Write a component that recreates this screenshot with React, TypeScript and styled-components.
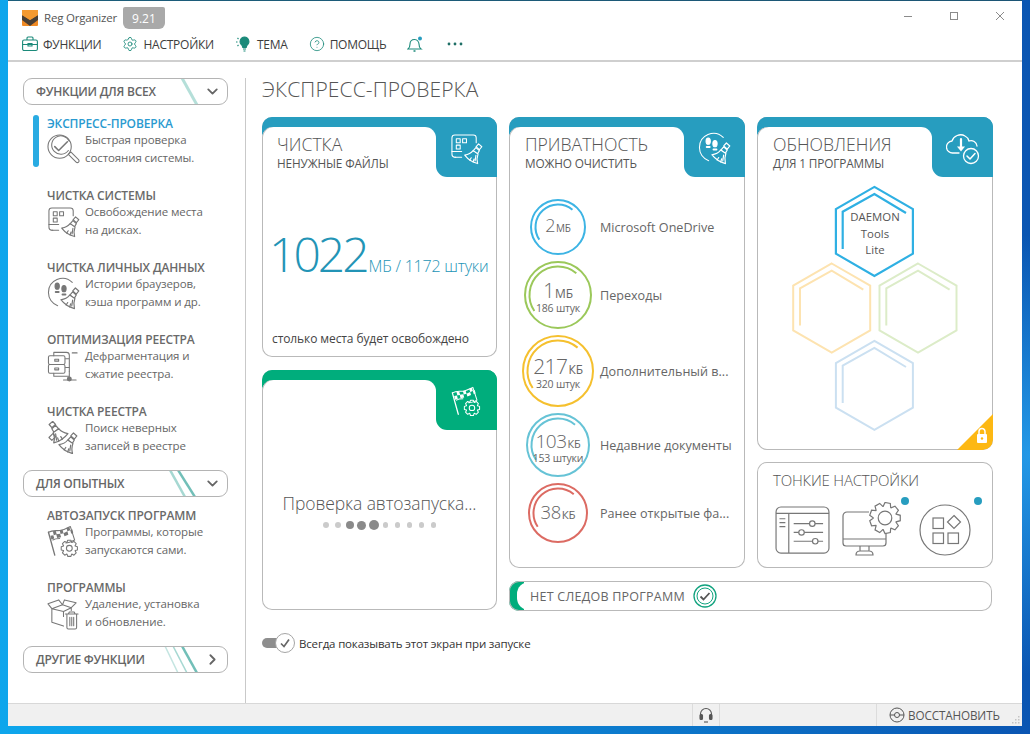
import React from "react";
import styled, { createGlobalStyle } from "styled-components";
import { Settings, CircleHelp, ChevronDown, ChevronRight } from "lucide-react";

const Global = createGlobalStyle`
  html, body { margin: 0; padding: 0; height: 734px; overflow: hidden; }
  body { font-family: "Open Sans", "Noto Sans", sans-serif; color: #666; }
  * { box-sizing: border-box; }
`;

const BLUE = "#279dbf";
const GREEN = "#00ad7c";

const Desktop = styled.div`
  width: 1030px; height: 734px; padding: 1px 8px 8px 8px;
  background:
    radial-gradient(ellipse 160px 220px at 100% 62%, rgba(40, 165, 240, .85), transparent),
    linear-gradient(90deg, #0ea6ec 0%, #0d8edb 40%, #0a55b2 100%);
`;
const Window = styled.div`
  width: 1014px; height: 725px; background: #fff; display: flex; flex-direction: column;
  box-shadow: 0 -1px 0 0 rgba(30,85,110,.9);
`;
const TitleBar = styled.div`
  height: 29px; display: flex; align-items: center; padding: 4px 0 0 14px; flex: none;
`;
const AppName = styled.span`
  font-size: 11.5px; color: #555; margin-left: 6px; letter-spacing: -.2px;
`;
const Version = styled.span`
  margin: 1px 0 0 6px; width: 42px; height: 22px; background: #a9a9a9; color: #fff; font-size: 12px;
  display: flex; align-items: center; justify-content: center; border-radius: 2px 2px 6px 6px;
`;
const WinControls = styled.div`
  margin: 0 0 4px auto; display: flex; align-items: center; color: #8b8b8b; padding-right: 17px;
  svg { display: block; margin-left: 36px; }
`;
const Toolbar = styled.div`
  height: 32px; padding: 0 0 2px 14px; display: flex; align-items: center; gap: 21px; flex: none;
  border-bottom: 2px solid #cfcfcf;
`;
const ToolItem = styled.div<{ $ml?: number }>`
  display: flex; align-items: center; gap: 5px; font-size: 12px; color: #3d3d3d; letter-spacing: -.25px;
  margin-left: ${(p) => p.$ml ?? 0}px;
  svg { color: #1b8a7a; display: block; flex: none; }
`;
const Body = styled.div`
  flex: 1; display: flex; min-height: 0;
`;
const Sidebar = styled.div`
  width: 238px; margin-top: 16px; padding: 0 17px 0 15px; border-right: 1px solid #c9c9c9; flex: none;
  display: flex; flex-direction: column;
`;
const GroupHeader = styled.div<{ $top?: number }>`
  height: 27px; margin-top: ${(p) => p.$top ?? 0}px; border: 1px solid #b4b4b4; border-radius: 9px;
  display: flex; align-items: center; padding-left: 12px; font-size: 12px; font-weight: 600; color: #666; flex: none;
  overflow: hidden; letter-spacing: -.24px; white-space: nowrap;
  & > svg:last-child { color: #666; margin: 0 6px 0 0; flex: none; }
`;
const Stripes = styled.svg`
  margin-left: auto; flex: none; display: block; margin-right: 2px;
`;
const Item = styled.div<{ $top?: number }>`
  display: flex; height: 54px; padding-left: 10px; margin-top: ${(p) => p.$top ?? 18}px; flex: none;
`;
const Marker = styled.div<{ $on?: boolean }>`
  width: 6px; height: 52px; margin: 1px 8px 0 0; border-radius: 3px; flex: none;
  background: ${(p) => (p.$on ? "#29abe2" : "transparent")};
`;
const ItemBody = styled.div`
  flex: 1; min-width: 0; padding-top: 1px;
`;
const ItemTitle = styled.div<{ $on?: boolean }>`
  font-size: 12px; line-height: 18px; font-weight: 600; white-space: nowrap; letter-spacing: -.15px;
  color: ${(p) => (p.$on ? "#2a9ad0" : "#6a6a6a")};
`;
const ItemRow = styled.div`
  display: flex;
`;
const ItemIcon = styled.div`
  width: 38px; flex: none; color: #777;
  svg { display: block; }
`;
const ItemDesc = styled.div`
  font-size: 11.5px; line-height: 18px; color: #666; white-space: nowrap; letter-spacing: -.1px; margin-top: -2px;
`;
const Main = styled.div`
  flex: 1; padding: 13px 0 0 16px; min-width: 0;
`;
const PageTitle = styled.div`
  font-size: 21px; line-height: 28px; font-weight: 300; color: #555; margin-bottom: 14px; letter-spacing: .1px;
`;
const Board = styled.div`
  display: flex; gap: 12px; align-items: flex-start;
`;
const LeftCol = styled.div`
  width: 235px; display: flex; flex-direction: column; gap: 13px; flex: none;
`;
const RightArea = styled.div`
  width: 484px; display: flex; flex-direction: column; gap: 13px; flex: none;
`;
const RightRow = styled.div`
  display: flex; gap: 12px; height: 451px;
`;
const RightStack = styled.div`
  display: flex; flex-direction: column; gap: 12px;
`;
const Card = styled.div<{ $h?: number; $w?: number }>`
  position: relative; border-radius: 10px; overflow: hidden; background: #fff;
  box-shadow: inset 0 0 0 1px #b9b9b9;
  ${(p) => (p.$h ? `height: ${p.$h}px; flex: none;` : "")}
  ${(p) => (p.$w ? `width: ${p.$w}px; flex: none;` : "")}
  display: flex; flex-direction: column;
`;
const CardHeader = styled.div<{ $c: string }>`
  height: 60px; display: flex; flex: none;
  background: linear-gradient(${(p) => p.$c} 30px, #fff 30px);
`;
const Tab = styled.div<{ $pl?: number }>`
  flex: 1; margin-top: 10px; background: #fff; border-radius: 11px 11px 0 0; padding: 7px 0 0 ${(p) => p.$pl ?? 16}px;
  box-shadow: inset 1px 0 0 #b9b9b9;
`;
const CardTitle = styled.div`
  font-size: 17.6px; line-height: 21px; font-weight: 300; color: #555; white-space: nowrap;
`;
const CardSub = styled.div`
  font-size: 11.8px; line-height: 16px; color: #555; white-space: nowrap; letter-spacing: -.15px;
`;
const Corner = styled.div<{ $c: string }>`
  width: 61px; flex: none; background: ${(p) => p.$c}; border-bottom-left-radius: 11px; color: #fff;
  display: flex; align-items: center; justify-content: center; padding: 3px 0 0 0;
  svg { display: block; }
`;
const SizeBody = styled.div`
  flex: 1; display: flex; flex-direction: column; padding: 0 8px 9px 10px;
`;
const BigLine = styled.div`
  display: flex; align-items: baseline; color: #2394b6; margin-top: 44px; white-space: nowrap;
`;
const BigNum = styled.span`
  font-size: 48px; line-height: 66px; font-weight: 300; letter-spacing: -3px; margin-left: -3px;
`;
const BigRest = styled.span`
  font-size: 16.1px; font-weight: 300; margin-left: 2px; letter-spacing: -.25px;
`;
const Note = styled.div`
  margin-top: auto; font-size: 12px; line-height: 18px; color: #444; white-space: nowrap; letter-spacing: -.1px;
`;
const LoadBody = styled.div`
  flex: 1; display: flex; flex-direction: column; align-items: center; padding-top: 60px;
`;
const LoadText = styled.div`
  font-size: 17.5px; line-height: 26px; font-weight: 300; color: #555; white-space: nowrap; letter-spacing: -.1px;
`;
const Dots = styled.div`
  display: flex; align-items: center; height: 12px; margin-top: 3px;
`;
const DotSlot = styled.div`
  width: 12px; display: flex; justify-content: center;
`;
const Dot = styled.div<{ $s: number; $dark?: boolean }>`
  width: ${(p) => p.$s}px; height: ${(p) => p.$s}px; border-radius: 50%;
  background: ${(p) => (p.$dark ? "#8a8a8a" : "#cbcbcb")};
`;
const RingList = styled.div`
  display: flex; flex-direction: column; gap: 6px; padding-top: 22px;
`;
const RingRow = styled.div`
  display: flex; align-items: center;
`;
const RingSlot = styled.div`
  width: 84px; flex: none; display: flex; justify-content: center; padding-left: 14px;
`;
const RingStack = styled.div<{ $d: number }>`
  width: ${(p) => p.$d}px; height: ${(p) => p.$d}px; display: grid; place-items: center; flex: none;
  & > * { grid-area: 1 / 1; }
`;
const RingText = styled.div<{ $two?: boolean }>`
  display: flex; flex-direction: column; align-items: center; color: #666; white-space: nowrap;
  padding-top: ${(p) => (p.$two ? 6 : 0)}px;
`;
const RingValue = styled.div<{ $n: number; $two?: boolean }>`
  font-size: ${(p) => p.$n}px; line-height: ${(p) => (p.$two ? 16 : p.$n + 1)}px; font-weight: 300; letter-spacing: -.5px;
`;
const RingUnit = styled.span<{ $u: number }>`
  font-size: ${(p) => p.$u}px; font-weight: 400; margin-left: 1px; letter-spacing: -.2px;
`;
const RingCount = styled.div`
  font-size: 10.5px; line-height: 12px; letter-spacing: -.2px;
`;
const RingLabel = styled.div`
  font-size: 12.6px; color: #666; white-space: nowrap; padding-left: 7px;
`;
const HexBody = styled.div`
  position: relative; flex: 1;
  svg { display: block; }
`;
const HexText = styled.div`
  position: absolute; left: 0; top: 32px; width: 236px; text-align: center;
  font-size: 11.4px; line-height: 16.5px; color: #555;
`;
const LockMark = styled.div`
  position: absolute; right: 0; bottom: 0; line-height: 0;
`;
const FineBody = styled.div`
  padding: 8px 0 0 16px; height: 100%; position: relative;
`;
const FineTitle = styled.div`
  font-size: 15px; line-height: 20px; font-weight: 300; color: #555; white-space: nowrap; letter-spacing: -.2px;
`;
const FineIcons = styled.div`
  display: flex; margin-top: 12px; color: #777; align-items: center;
  svg { display: block; flex: none; }
`;
const FineIcon = styled.div<{ $ml: number }>`
  margin-left: ${(p) => p.$ml}px;
`;
const BlueDot = styled.div<{ $x: number }>`
  position: absolute; top: 35px; left: ${(p) => p.$x}px; width: 8px; height: 8px; border-radius: 50%; background: ${BLUE};
`;
const TraceBar = styled.div`
  height: 30px; width: 483px; border-radius: 10px; display: flex; align-items: center; overflow: hidden;
  box-shadow: inset 0 0 0 1px #b9b9b9; position: relative; padding-left: 21px; gap: 8px;
  font-size: 12.5px; color: #666; letter-spacing: .25px; white-space: nowrap;
  background: linear-gradient(90deg, ${GREEN} 15px, #fff 15px);
  &::before {
    content: ""; position: absolute; left: 8px; top: 1px; bottom: 1px; width: 14px; background: #fff;
    border-radius: 12px 0 0 12px;
  }
  & > * { position: relative; }
  svg { display: block; flex: none; }
`;
const TraceText = styled.span`
  position: relative;
`;
const SwitchRow = styled.div`
  display: flex; align-items: center; margin-top: 10px; font-size: 11.5px; color: #333; letter-spacing: -.17px;
  gap: 4px; white-space: nowrap;
`;
const SwitchBox = styled.div`
  width: 33px; height: 20px; display: flex; align-items: center; flex: none; position: relative;
`;
const SwitchTrack = styled.div`
  width: 24px; height: 10px; background: #8e8e8e; border-radius: 5px 0 0 5px;
`;
const SwitchKnob = styled.div`
  position: absolute; right: 0; top: 0; width: 20px; height: 20px; border-radius: 50%; background: #fff;
  border: 1px solid #a5a5a5; display: flex; align-items: center; justify-content: center; color: #666;
`;
const StatusBar = styled.div`
  height: 23px; flex: none; background: #f0f0f0; border-top: 1px solid #d8d8d8; display: flex; position: relative;
`;
const HelpCell = styled.div`
  width: 28px; margin-left: 684px; border-left: 1px solid #dcdcdc; border-right: 1px solid #dcdcdc;
  display: flex; align-items: center; justify-content: center; flex: none; color: #555;
  svg { display: block; }
`;
const RestoreCell = styled.div`
  width: 146px; margin-left: 156px; border-left: 1px solid #dcdcdc; padding-left: 12px;
  display: flex; align-items: center; flex: none; color: #555; gap: 3px;
  svg { display: block; flex: none; }
`;
const Restore = styled.span`
  font-size: 11.7px; letter-spacing: -.12px; color: #555;
`;
const Grip = styled.svg`
  position: absolute; right: 2px; bottom: 2px;
`;

type IP = { size?: number; bg?: string };

const BroomPart = ({ tx, ty, s = 1, bg = "#fff" }: { tx: number; ty: number; s?: number; bg?: string }) => (
  <g transform={`translate(${tx} ${ty}) scale(${s})`}>
    <path d="M16.6 1.2l3.2 2.8-2.4 2.9-3.3-2.9z" fill={bg} />
    <path d="M14 4.8l-2.6 3 4 3.4 2-3.4z" fill={bg} />
    <path d="M11.2 7.8c-2 2.6-5 3.9-8.2 4.4 2 2.6 6.7 6.8 12.7 8.3-.8-3-.8-6.3.4-9.4z" fill={bg} />
    <path d="M9.4 14.8l-1.5 2.3M12.2 16l-1 3M14 12.5l-.8 5.5" />
  </g>
);

const I = ({ size = 34, children }: { size?: number; children: React.ReactNode }) => (
  <svg width={size} height={size} viewBox="0 0 34 34" fill="none" stroke="currentColor" strokeWidth="1.1" strokeLinejoin="round" strokeLinecap="round">
    {children}
  </svg>
);

function gearD(cx: number, cy: number, r: number, teeth = 8) {
  const pts: string[] = [];
  const inner = r * 0.76;
  for (let i = 0; i < teeth; i++) {
    const a = (i / teeth) * Math.PI * 2;
    const w = Math.PI / teeth;
    const seq: [number, number][] = [[a - w * 0.95, inner], [a - w * 0.5, r], [a + w * 0.5, r], [a + w * 0.95, inner]];
    seq.forEach(([an, rr]) => pts.push(`${(cx + Math.cos(an) * rr).toFixed(2)} ${(cy + Math.sin(an) * rr).toFixed(2)}`));
  }
  return "M" + pts.join("L") + "Z";
}

const SearchCheck = ({ size }: IP) => (
  <I size={size}>
    <circle cx="13" cy="14" r="12" />
    <path d="M23 8.5A9.500 9.500 0 1 0 22 18" />
    <path d="M8 14l4 4 9-9" strokeWidth="1.6" />
    <path d="M22 22l2.500-2.500 8 8a1.700 1.700 0 0 1-2.500 2.500z" />
  </I>
);
const DiskBroom = ({ size, bg }: IP) => (
  <I size={size}>
    <path d="M12 26H5a3 3 0 0 1-3-3V6a3 3 0 0 1 3-3h19a3 3 0 0 1 3 3v5" />
    <path d="M2 20h10M6 26l-1 0" />
    <rect x="6.5" y="7" width="4" height="4" /><rect x="13" y="7" width="4" height="4" /><rect x="6.5" y="13.5" width="4" height="4" />
    <BroomPart tx={12} ty={11} s={1.05} bg={bg} />
  </I>
);
const PrivacyBroom = ({ size, bg }: IP) => (
  <I size={size}>
    <path d="M11 29.500C5 27.500 1.500 22 1.500 16A14.500 14.500 0 0 1 26 5.500" />
    <ellipse cx="10.5" cy="9.5" rx="2.2" ry="3.2" fill="currentColor" />
    <path d="M9 15.5h3" strokeWidth="2" />
    <ellipse cx="17.5" cy="12" rx="2.2" ry="3.2" fill="currentColor" />
    <path d="M16 18h3" strokeWidth="2" />
    <BroomPart tx={11} ty={10} s={1.1} bg={bg} />
  </I>
);
const RegOpt = ({ size }: IP) => (
  <I size={size}>
    <rect x="1.5" y="7" width="17" height="9" rx="1.5" /><rect x="1.5" y="16" width="17" height="9" rx="1.5" />
    <path d="M8 10.500h4v2H8zM8 19.500h4v2H8z" />
    <path d="M7 7V3.500h13a3 3 0 0 1 3 3V23M19 10h4M26 4h5" />
    <path d="M7 25v3h16v-5M19 19h4M23 28v3M17 32h13" />
    <circle cx="23" cy="31" r="2" fill="currentColor" />
  </I>
);
const TwoBrooms = ({ size, bg }: IP) => (
  <I size={size}>
    <g transform="translate(34 0) scale(-1 1)"><BroomPart tx={9} ty={-1} s={1.15} bg={bg} /></g>
    <BroomPart tx={9} ty={11} s={1.1} bg={bg} />
    <path d="M2 17l4-4 3 3-4 4z" />
  </I>
);
const FlagGear = ({ size }: IP) => (
  <I size={size}>
    <path d="M8 31L1.500 7.500" strokeWidth="1.4" />
    <path d="M1.500 7.500c5-3 9-1 13-2s7-3 9.500-4l4.500 14c-3 1.500-6 3-9 3" />
    <path d="M6 6.500l3-.5 1 3.500-3 1zM13 5.500l3-.5 1 3.500-3 .7zM20 3l3-1 1 3.500-3 1zM9.500 9.500l4-.5 1 3.500-4 1zM17 8.500l4-2 1 3.500-4 1.500zM3.500 11l3-.5 1 3.500-3 1zM24 5.500l2-1 1 3.500-2 1z" fill="currentColor" stroke="none" />
    <path d="M6 15.500c2.500-1.500 4-1.500 7-1.500" />
    <path d={gearD(23, 24, 8.5)} />
    <circle cx="23" cy="24" r="3" />
  </I>
);
const BoxTrash = ({ size }: IP) => (
  <I size={size}>
    <path d="M5 12v14l12 4M5 12l12 3v5M17 15l8-4v3M5 12L1 7l11-4 4 5-11 4zM16 8l9 3 5-5-12-3-2 5z" />
    <path d="M19 17.500h13M22 17.500l1-2h5l1 2M20.500 17.500v14a1.500 1.500 0 0 0 1.500 1.500h7a1.500 1.500 0 0 0 1.500-1.500v-14" />
    <path d="M23.500 21v8.500M25.500 21v8.500M27.500 21v8.500" />
  </I>
);
const CloudDown = ({ size }: IP) => (
  <I size={size}>
    <path d="M13 21H7a6 6 0 0 1-1-12c1.500-5 8-8 13-5 2 1 3.500 3 4 5a6 6 0 0 1 8 5" strokeWidth="1.3" />
    <path d="M15 7v9" strokeWidth="2.2" />
    <path d="M11 14.500h8l-4 5z" fill="currentColor" stroke="none" />
    <circle cx="25" cy="24" r="7.5" strokeWidth="1.3" />
    <path d="M21 24l3 3 5-5.500" strokeWidth="1.5" />
  </I>
);

const Logo = () => (
  <svg width="16" height="16" viewBox="0 0 16 16">
    <rect x="0" y="0" width="16" height="16" rx="1" fill="#f08a24" />
    <path d="M0 5l8 5 8-5v5l-8 6-8-6z" fill="#4a4036" />
    <path d="M0 0h16v5l-8 5-8-5z" fill="#f59a30" />
  </svg>
);

function arc(c: number, r: number, a0: number, a1: number) {
  const p = (a: number) => {
    const t = ((a - 90) * Math.PI) / 180;
    return `${(c + r * Math.cos(t)).toFixed(2)} ${(c + r * Math.sin(t)).toFixed(2)}`;
  };
  return `M${p(a0)}A${r} ${r} 0 0 1 ${p(a1)}`;
}

const Ring = ({ d, color }: { d: number; color: string }) => {
  const c = d / 2;
  return (
    <svg width={d} height={d} fill="none" stroke={color}>
      <circle cx={c} cy={c} r={c - 1} strokeWidth="2" />
      <path d={arc(c, c - 5.5, 236, 400)} strokeWidth="2" />
    </svg>
  );
};

const rings = [
  { d: 56, color: "#3db4e4", v: "2", n: 18, unit: "МБ", u: 10, label: "Microsoft OneDrive" },
  { d: 68, color: "#9bc85a", v: "1", n: 20, unit: "МБ", u: 12, count: "186 штук", label: "Переходы" },
  { d: 72, color: "#f5c02e", v: "217", n: 21, unit: "КБ", u: 12, count: "320 штук", label: "Дополнительный в..." },
  { d: 64, color: "#66c3d6", v: "103", n: 19, unit: "КБ", u: 11, count: "153 штуки", label: "Недавние документы" },
  { d: 60, color: "#dc6b63", v: "38", n: 18.5, unit: "КБ", u: 11.5, label: "Ранее открытые фа..." },
];

const Hex = ({ x, y, c, w = 2 }: { x: number; y: number; c: string; w?: number }) => (
  <g transform={`translate(${x} ${y})`} fill="none" stroke={c} strokeWidth={w} strokeLinejoin="miter">
    <path d="M0-44.500L38.500-22.300V22.300L0 44.500-38.500 22.300V-22.300Z" />
    <path d="M-31.700 17.600V-19.700L0-37.400 31.600-18.400" />
  </g>
);

const StripeSet = ({ n }: { n: number }) => (
  <Stripes width="46" height="27" viewBox="0 0 46 27" fill="none" strokeWidth="2.5">
    {n === 1 && <path d="M26 0l15 27" stroke="#b5dfd9" strokeWidth="3" />}
    {n === 2 && (<><path d="M14 0l15 27" stroke="#a6d8d2" /><path d="M22 0l17 27" stroke="#72bfb8" /></>)}
    {n === 3 && (<><path d="M9 0l13 27" stroke="#c4e5e1" strokeWidth="1.5" /><path d="M17 0l14 27" stroke="#a6d8d2" strokeWidth="1.5" /><path d="M26 0l15 27" stroke="#72bfb8" /></>)}
  </Stripes>
);

const items1 = [
  { t: "ЭКСПРЕСС-ПРОВЕРКА", a: "Быстрая проверка", b: "состояния системы.", on: true, I: SearchCheck },
  { t: "ЧИСТКА СИСТЕМЫ", a: "Освобождение места", b: "на дисках.", I: DiskBroom },
  { t: "ЧИСТКА ЛИЧНЫХ ДАННЫХ", a: "Истории браузеров,", b: "кэша программ и др.", I: PrivacyBroom },
  { t: "ОПТИМИЗАЦИЯ РЕЕСТРА", a: "Дефрагментация и", b: "сжатие реестра.", I: RegOpt },
  { t: "ЧИСТКА РЕЕСТРА", a: "Поиск неверных", b: "записей в реестре", I: TwoBrooms },
];
const items2 = [
  { t: "АВТОЗАПУСК ПРОГРАММ", a: "Программы, которые", b: "запускаются сами.", I: FlagGear },
  { t: "ПРОГРАММЫ", a: "Удаление, установка", b: "и обновление.", I: BoxTrash },
];

type It = { t: string; a: string; b: string; on?: boolean; I: React.FC<IP> };
const SideItem = ({ it, top }: { it: It; top: number }) => (
  <Item $top={top}>
    <Marker $on={it.on} />
    <ItemBody>
      <ItemTitle $on={it.on}>{it.t}</ItemTitle>
      <ItemRow>
        <ItemIcon><it.I size={33} bg="#fff" /></ItemIcon>
        <ItemDesc>{it.a}<br />{it.b}</ItemDesc>
      </ItemRow>
    </ItemBody>
  </Item>
);

const CheckMark = () => (
  <svg width="12" height="12" viewBox="0 0 12 12" fill="none" stroke="currentColor" strokeWidth="1.7"><path d="M2 6.500l3 3 5-7" /></svg>
);

export default function App() {
  const dots = [6, 6, 8, 9, 10, 5.5, 5.5, 5.5, 5.5, 5.5];
  return (
    <Desktop>
      <Global />
      <Window>
        <TitleBar>
          <Logo />
          <AppName>Reg Organizer</AppName>
          <Version>9.21</Version>
          <WinControls>
            <svg width="10" height="10" viewBox="0 0 10 10" stroke="currentColor" fill="none"><path d="M1 5.500h8" /></svg>
            <svg width="10" height="10" viewBox="0 0 10 10" stroke="currentColor" fill="none"><rect x="1.5" y="1.5" width="7" height="7" /></svg>
            <svg width="10" height="10" viewBox="0 0 10 10" stroke="currentColor" fill="none"><path d="M1 1l8 8M9 1l-8 8" /></svg>
          </WinControls>
        </TitleBar>
        <Toolbar>
          <ToolItem>
            <svg width="16" height="16" viewBox="0 0 16 16" fill="none" stroke="currentColor" strokeWidth="1.1"><rect x=".6" y="4" width="14.8" height="10.5" rx="1.5" /><path d="M5 4V2a1 1 0 0 1 1-1h4a1 1 0 0 1 1 1v2M.6 8.500h14.800M6 7.500h4v2.500H6z" /></svg>
            ФУНКЦИИ
          </ToolItem>
          <ToolItem><Settings size={16} strokeWidth={1.3} />НАСТРОЙКИ</ToolItem>
          <ToolItem>
            <svg width="17" height="17" viewBox="0 0 17 17" fill="none" stroke="currentColor" strokeWidth="1.1"><path d="M9.500 1a4.500 4.500 0 0 1 2.700 8c-.7.700-.9 1.500-1 2.500H7.800C7.700 10.500 7.500 9.700 6.800 9a4.500 4.500 0 0 1 2.700-8z" fill="currentColor" /><path d="M8 13h3M8.500 15h2M1 6h1.500M2.500 2l1 1M2.500 10l1-1" /></svg>
            ТЕМА
          </ToolItem>
          <ToolItem><CircleHelp size={16} strokeWidth={1.2} />ПОМОЩЬ</ToolItem>
          <ToolItem>
            <svg width="16" height="17" viewBox="0 0 16 17" fill="none" stroke="currentColor" strokeWidth="1.1"><path d="M1 13c1.500-1 2-2.500 2-5s1.500-4.500 4.500-4.500c1.500 0 2.500.5 3.300 1.500.8 1 1.200 2 1.200 3 0 2.500.5 4 2 5z" /><path d="M6.500 15h2" strokeWidth="1.5" /><circle cx="13" cy="2.500" r="2" fill="#279dbf" stroke="none" /></svg>
          </ToolItem>
          <ToolItem $ml={3}>
            <svg width="16" height="4" viewBox="0 0 16 4" fill="#1f6f66"><circle cx="2" cy="2" r="1.4" /><circle cx="8" cy="2" r="1.4" /><circle cx="14" cy="2" r="1.4" /></svg>
          </ToolItem>
        </Toolbar>
        <Body>
          <Sidebar>
            <GroupHeader>ФУНКЦИИ ДЛЯ ВСЕХ<StripeSet n={1} /><ChevronDown size={17} strokeWidth={2.6} /></GroupHeader>
            {items1.map((it, i) => <SideItem key={it.t} it={it} top={i === 0 ? 9 : 18} />)}
            <GroupHeader $top={14}>ДЛЯ ОПЫТНЫХ<StripeSet n={2} /><ChevronDown size={17} strokeWidth={2.6} /></GroupHeader>
            {items2.map((it, i) => <SideItem key={it.t} it={it} top={i === 0 ? 9 : 18} />)}
            <GroupHeader $top={14}>ДРУГИЕ ФУНКЦИИ<StripeSet n={3} /><ChevronRight size={17} strokeWidth={2.6} /></GroupHeader>
          </Sidebar>
          <Main>
            <PageTitle>ЭКСПРЕСС-ПРОВЕРКА</PageTitle>
            <Board>
              <LeftCol>
                <Card $h={240}>
                  <CardHeader $c={BLUE}>
                    <Tab $pl={15}><CardTitle>ЧИСТКА</CardTitle><CardSub>НЕНУЖНЫЕ ФАЙЛЫ</CardSub></Tab>
                    <Corner $c={BLUE}><DiskBroom size={33} bg={BLUE} /></Corner>
                  </CardHeader>
                  <SizeBody>
                    <BigLine><BigNum>1022</BigNum><BigRest>МБ / 1172 штуки</BigRest></BigLine>
                    <Note>столько места будет освобождено</Note>
                  </SizeBody>
                </Card>
                <Card $h={240}>
                  <CardHeader $c={GREEN}>
                    <Tab />
                    <Corner $c={GREEN}><FlagGear size={31} /></Corner>
                  </CardHeader>
                  <LoadBody>
                    <LoadText>Проверка автозапуска...</LoadText>
                    <Dots>{dots.map((s, i) => <DotSlot key={i}><Dot $s={s} $dark={i >= 2 && i <= 4} /></DotSlot>)}</Dots>
                  </LoadBody>
                </Card>
                <SwitchRow>
                  <SwitchBox><SwitchTrack /><SwitchKnob><CheckMark /></SwitchKnob></SwitchBox>
                  <span>Всегда показывать этот экран при запуске</span>
                </SwitchRow>
              </LeftCol>
              <RightArea>
                <RightRow>
                  <Card $w={236}>
                    <CardHeader $c={BLUE}>
                      <Tab><CardTitle>ПРИВАТНОСТЬ</CardTitle><CardSub>МОЖНО ОЧИСТИТЬ</CardSub></Tab>
                      <Corner $c={BLUE}><PrivacyBroom size={33} bg={BLUE} /></Corner>
                    </CardHeader>
                    <RingList>
                      {rings.map((r) => (
                        <RingRow key={r.label}>
                          <RingSlot>
                            <RingStack $d={r.d}>
                              <Ring d={r.d} color={r.color} />
                              <RingText $two={!!r.count}>
                                <RingValue $n={r.n} $two={!!r.count}>{r.v}<RingUnit $u={r.u}>{r.unit}</RingUnit></RingValue>
                                {r.count && <RingCount>{r.count}</RingCount>}
                              </RingText>
                            </RingStack>
                          </RingSlot>
                          <RingLabel>{r.label}</RingLabel>
                        </RingRow>
                      ))}
                    </RingList>
                  </Card>
                  <RightStack>
                    <Card $w={236} $h={333}>
                      <CardHeader $c={BLUE}>
                        <Tab><CardTitle>ОБНОВЛЕНИЯ</CardTitle><CardSub>ДЛЯ 1 ПРОГРАММЫ</CardSub></Tab>
                        <Corner $c={BLUE}><CloudDown size={34} /></Corner>
                      </CardHeader>
                      <HexBody>
                        <svg width="236" height="273">
                          <Hex x={117.4} y={54.4} c="#2fb0e3" w={2.2} />
                          <Hex x={74.7} y={131} c="#fde3b0" />
                          <Hex x={161} y={131} c="#dcecc8" />
                          <Hex x={117.4} y={208.4} c="#cbe0f1" />
                        </svg>
                        <HexText>DAEMON<br />Tools<br />Lite</HexText>
                        <LockMark>
                          <svg width="36" height="36" viewBox="0 0 36 36"><path d="M36 0v26a10 10 0 0 1-10 10H0z" fill="#fdb813" /><rect x="20" y="20" width="10" height="9" rx="1" fill="#fff" /><path d="M22 20.500v-3a3 3 0 0 1 6 0v3" fill="none" stroke="#fff" strokeWidth="1.5" /><circle cx="25" cy="24.500" r="1.2" fill="#fdb813" /></svg>
                        </LockMark>
                      </HexBody>
                    </Card>
                    <Card $w={236} $h={106}>
                      <FineBody>
                        <FineTitle>ТОНКИЕ НАСТРОЙКИ</FineTitle>
                        <FineIcons>
                          <FineIcon $ml={2}>
                            <svg width="55" height="49" viewBox="0 0 56 50" fill="none" stroke="currentColor" strokeWidth="1.2">
                              <rect x="1" y="1" width="54" height="47" rx="5" /><path d="M1 7.500h54M14 7.500V48M4.500 13h6M4.500 17h6M4.500 21h6M19 18h30M19 27h30M19 36h30" />
                              <circle cx="38" cy="18" r="2.8" fill="#fff" /><circle cx="27" cy="27" r="2.8" fill="#fff" /><circle cx="41" cy="36" r="2.8" fill="#fff" />
                            </svg>
                          </FineIcon>
                          <FineIcon $ml={12}>
                            <svg width="60" height="56" viewBox="0 0 60 56" fill="none" stroke="currentColor" strokeWidth="1.2">
                              <path d="M27 10H5a4 4 0 0 0-4 4v27a3 3 0 0 0 3 3h37a3 3 0 0 0 3-3V26" /><path d="M1 37h43M18 44v5M27 44v5M14 53c0-3 2-4 4-4h9c2 0 4 1 4 4z" />
                              <path d={gearD(43, 16, 15.5, 9)} fill="#fff" /><circle cx="43" cy="16" r="6.8" />
                            </svg>
                          </FineIcon>
                          <FineIcon $ml={17}>
                            <svg width="52" height="52" viewBox="0 0 52 52" fill="none" stroke="currentColor" strokeWidth="1.2">
                              <circle cx="26" cy="26" r="25" /><rect x="14" y="14" width="10.5" height="10.5" /><rect x="14" y="29" width="10.5" height="10.5" /><rect x="29" y="29" width="10.5" height="10.5" /><path d="M35 11.500l6.500 6.500-6.500 6.500-6.500-6.500z" />
                            </svg>
                          </FineIcon>
                        </FineIcons>
                        <BlueDot $x={144} />
                        <BlueDot $x={217} />
                      </FineBody>
                    </Card>
                  </RightStack>
                </RightRow>
                <TraceBar>
                  <TraceText>НЕТ СЛЕДОВ ПРОГРАММ</TraceText>
                  <svg width="24" height="24" viewBox="0 0 24 24" fill="none"><circle cx="12" cy="12" r="11" stroke="#12a37f" strokeWidth="1.3" /><circle cx="12" cy="12" r="8" stroke="#12a37f" strokeWidth="1" /><path d="M7.500 12.500l3 3 6-6.500" stroke="#555" strokeWidth="1.8" /></svg>
                </TraceBar>
              </RightArea>
            </Board>
          </Main>
        </Body>
        <StatusBar>
          <HelpCell>
            <svg width="16" height="16" viewBox="0 0 16 16" fill="none" stroke="currentColor" strokeWidth="1.1"><path d="M2.500 9V7a5.500 5.500 0 0 1 11 0v2" /><rect x="2" y="7.5" width="2.5" height="5" rx="1" fill="currentColor" /><rect x="11.5" y="7.5" width="2.5" height="5" rx="1" fill="currentColor" /><path d="M6 15h4" /></svg>
          </HelpCell>
          <RestoreCell>
            <svg width="16" height="16" viewBox="0 0 16 16" fill="none" stroke="currentColor" strokeWidth="1"><circle cx="8" cy="8" r="7" /><circle cx="8" cy="8" r="2.5" /><path d="M1 8h4.500M10.500 8H15" /></svg>
            <Restore>ВОССТАНОВИТЬ</Restore>
          </RestoreCell>
          <Grip width="8" height="8" viewBox="0 0 8 8" fill="#c4c4c4"><rect x="6" y="0" width="1.5" height="1.5" /><rect x="3" y="3" width="1.5" height="1.5" /><rect x="6" y="3" width="1.5" height="1.5" /><rect x="0" y="6" width="1.5" height="1.5" /><rect x="3" y="6" width="1.5" height="1.5" /><rect x="6" y="6" width="1.5" height="1.5" /></Grip>
        </StatusBar>
      </Window>
    </Desktop>
  );
}
